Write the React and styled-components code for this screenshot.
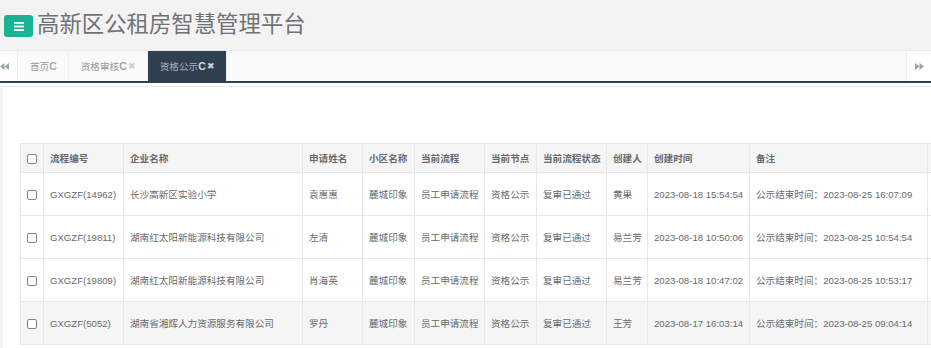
import styled, { createGlobalStyle } from "styled-components";

const GlobalStyle = createGlobalStyle`
  html, body {
    margin: 0;
    padding: 0;
    overflow: hidden;
    background: #fff;
  }
  body {
    font-family: "Liberation Sans", "Noto Sans CJK SC", sans-serif;
    color: #676a6c;
  }
`;

const columns = [
  { key: "check", title: "", width: 23 },
  { key: "no", title: "流程编号", width: 80 },
  { key: "company", title: "企业名称", width: 179 },
  { key: "name", title: "申请姓名", width: 60 },
  { key: "estate", title: "小区名称", width: 52 },
  { key: "flow", title: "当前流程", width: 70 },
  { key: "node", title: "当前节点", width: 52 },
  { key: "state", title: "当前流程状态", width: 70 },
  { key: "creator", title: "创建人", width: 41 },
  { key: "created", title: "创建时间", width: 102 },
  { key: "remark", title: "备注", width: 178 },
  { key: "ops", title: "", width: 120 },
];

const rows = [
  {
    no: "GXGZF(14962)",
    company: "长沙高新区实验小学",
    name: "袁惠惠",
    creator: "黄果",
    created: "2023-08-18 15:54:54",
    end: "2023-08-25 16:07:09",
  },
  {
    no: "GXGZF(19811)",
    company: "湖南红太阳新能源科技有限公司",
    name: "左清",
    creator: "易兰芳",
    created: "2023-08-18 10:50:06",
    end: "2023-08-25 10:54:54",
  },
  {
    no: "GXGZF(19809)",
    company: "湖南红太阳新能源科技有限公司",
    name: "肖海英",
    creator: "易兰芳",
    created: "2023-08-18 10:47:02",
    end: "2023-08-25 10:53:17",
  },
  {
    no: "GXGZF(5052)",
    company: "湖南省湘辉人力资源服务有限公司",
    name: "罗丹",
    creator: "王芳",
    created: "2023-08-17 16:03:14",
    end: "2023-08-25 09:04:14",
    hover: true,
  },
];

const tabs = [
  { label: "首页", closable: false },
  { label: "资格审核", closable: true },
  { label: "资格公示", closable: true, active: true },
];

const BarsIcon = () => (
  <svg width="10" height="9" viewBox="0 0 10 9">
    <rect x="0" y="0" width="10" height="1.8" fill="#fff" />
    <rect x="0" y="3.6" width="10" height="1.8" fill="#fff" />
    <rect x="0" y="7.2" width="10" height="1.8" fill="#fff" />
  </svg>
);

const DoubleArrow = ({ dir }) => (
  <svg
    width="9"
    height="7"
    viewBox="0 0 9 7"
    style={{ transform: dir === "left" ? "scaleX(-1)" : undefined }}
  >
    <polygon points="0,0 4.5,3.5 0,7" fill="#9aa3ad" />
    <polygon points="4.5,0 9,3.5 4.5,7" fill="#9aa3ad" />
  </svg>
);

export default function App() {
  return (
    <>
      <GlobalStyle />
      <Header>
        <MenuButton>
          <BarsIcon />
        </MenuButton>
        <Title>高新区公租房智慧管理平台</Title>
      </Header>

      <TabBar>
        <ScrollButton side="left">
          <DoubleArrow dir="left" />
        </ScrollButton>
        {tabs.map((tab) => (
          <Tab key={tab.label} $active={tab.active}>
            {tab.label}
            <RefreshMark $active={tab.active}>C</RefreshMark>
            {tab.closable && <CloseMark $active={tab.active}>✖</CloseMark>}
          </Tab>
        ))}
        <TabSpacer />
        <ScrollButton side="right">
          <DoubleArrow dir="right" />
        </ScrollButton>
      </TabBar>

      <Content>
        <Panel>
          <Table>
            <colgroup>
              {columns.map((c) => (
                <col key={c.key} style={{ width: c.width }} />
              ))}
            </colgroup>
            <thead>
              <tr>
                {columns.map((c) => (
                  <HeadCell key={c.key} $center={c.key === "check"}>
                    {c.key === "check" ? <Check /> : c.title}
                  </HeadCell>
                ))}
              </tr>
            </thead>
            <tbody>
              {rows.map((r) => (
                <Row key={r.no} $hover={r.hover}>
                  <Cell $center>
                    <Check />
                  </Cell>
                  <Cell>{r.no}</Cell>
                  <Cell>{r.company}</Cell>
                  <Cell>{r.name}</Cell>
                  <Cell>麓城印象</Cell>
                  <Cell>员工申请流程</Cell>
                  <Cell>资格公示</Cell>
                  <Cell>复审已通过</Cell>
                  <Cell>{r.creator}</Cell>
                  <Cell>{r.created}</Cell>
                  <Cell>公示结束时间：{r.end}</Cell>
                  <Cell />
                </Row>
              ))}
            </tbody>
          </Table>
        </Panel>
      </Content>
    </>
  );
}

// styles
const Header = styled.header`
  display: flex;
  align-items: center;
  gap: 4px;
  height: 51px;
  padding-left: 4px;
  background: #f3f3f4;
  border-bottom: 1px solid #e7eaec;
  box-sizing: border-box;
`;

const MenuButton = styled.div`
  display: flex;
  align-items: center;
  justify-content: center;
  width: 29px;
  height: 22px;
  border-radius: 3px;
  background: #1ab394;
  margin-top: 2px;
`;

const Title = styled.h1`
  margin: 0;
  font-size: 22.4px;
  font-weight: normal;
  color: #707274;
  line-height: 1;
`;

const TabBar = styled.nav`
  display: flex;
  height: 32px;
  background: #fafafa;
  border-bottom: 2px solid #2f4050;
  box-sizing: border-box;
  font-size: 9.6px;
`;

const ScrollButton = styled.div`
  display: flex;
  align-items: center;
  width: ${(p) => (p.side === "left" ? "18px" : "25px")};
  justify-content: ${(p) => (p.side === "left" ? "flex-start" : "center")};
  background: #fff;
  border-${(p) => (p.side === "left" ? "right" : "left")}: 1px solid #eee;
  box-sizing: border-box;
`;

const Tab = styled.div`
  display: flex;
  align-items: center;
  padding: 0 11px 0 12px;
  border-right: 1px solid #eee;
  color: ${(p) => (p.$active ? "#a7b1c2" : "#999")};
  background: ${(p) => (p.$active ? "#2f4050" : "transparent")};
  white-space: nowrap;
`;

const RefreshMark = styled.span`
  font-size: 10.5px;
  font-weight: bold;
  color: ${(p) => (p.$active ? "#d0d6de" : "#aaa")};
`;

const CloseMark = styled.span`
  margin-left: 1px;
  font-size: 9px;
  color: ${(p) => (p.$active ? "#d0d6de" : "#ccc")};
`;

const TabSpacer = styled.div`
  flex: 1;
`;

const Content = styled.main`
  margin-top: 3px;
  padding-left: 3px;
  background: #f3f3f4;
  height: 270px;
`;

const Panel = styled.section`
  height: 100%;
  padding: 56px 0 0 17px;
  background: #fff;
  border-top: 1px solid #e7eaec;
  box-sizing: border-box;
  overflow: hidden;
`;

const Table = styled.table`
  table-layout: fixed;
  width: 1027px;
  border-collapse: collapse;
  font-size: 9.6px;
`;

const HeadCell = styled.th`
  height: 29px;
  padding: 0 6px;
  background: #f5f5f6;
  border: 1px solid #e7e7e7;
  text-align: ${(p) => (p.$center ? "center" : "left")};
  font-weight: bold;
  color: #676a6c;
  white-space: nowrap;
  overflow: hidden;
  box-sizing: border-box;
`;

const Row = styled.tr`
  background: ${(p) => (p.$hover ? "#f5f5f5" : "#fff")};
`;

const Cell = styled.td`
  height: 43px;
  padding: 0 6px;
  border: 1px solid #e7e7e7;
  text-align: ${(p) => (p.$center ? "center" : "left")};
  color: #676a6c;
  white-space: nowrap;
  overflow: hidden;
  box-sizing: border-box;
`;

const Check = styled.span`
  display: inline-block;
  width: 10px;
  height: 10px;
  border: 1px solid #858585;
  border-radius: 2px;
  background: #fff;
  box-sizing: border-box;
  vertical-align: middle;
`;
